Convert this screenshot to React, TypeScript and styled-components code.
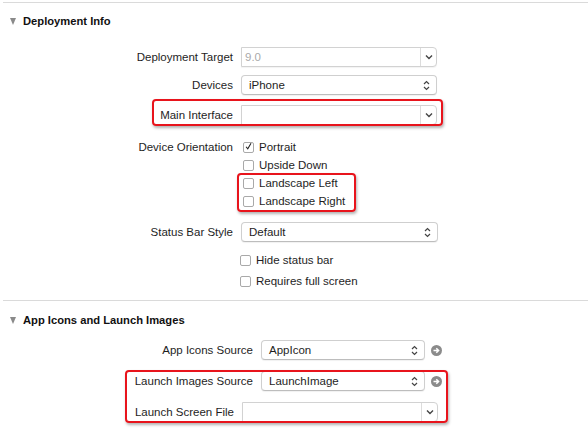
import styled, { createGlobalStyle } from 'styled-components';
import { ReactNode } from 'react';

const GlobalStyle = createGlobalStyle`
  html, body {
    margin: 0;
    padding: 0;
    background: #fff;
  }
  body {
    font-family: 'Liberation Sans', Arial, sans-serif;
    font-size: 11.5px;
    color: #1e1e1e;
  }
`;

function UpDown() {
  return (
    <svg width='7' height='11' viewBox='0 0 7 11'>
      <path d='M1 4 L3.5 1.5 L6 4 M1 7 L3.5 9.5 L6 7' fill='none' stroke='#444' strokeWidth='1.2' />
    </svg>
  );
}

function Down() {
  return (
    <svg width='8' height='6' viewBox='0 0 8 6'>
      <path d='M1 1.5 L4 4.5 L7 1.5' fill='none' stroke='#444' strokeWidth='1.4' />
    </svg>
  );
}

function Tick() {
  return (
    <svg width='11' height='11' viewBox='0 0 11 11'>
      <path d='M2.5 5.8 L4.6 8.3 L8.6 1.6' fill='none' stroke='#222' strokeWidth='1.3' />
    </svg>
  );
}

function GoArrow() {
  return (
    <svg width='11' height='11' viewBox='0 0 11 11'>
      <circle cx='5.5' cy='5.5' r='5.5' fill='#8b8b8b' />
      <path d='M2.5 5.5 H7.5 M5.3 3.2 L7.6 5.5 L5.3 7.8' fill='none' stroke='#fff' strokeWidth='1.5' />
    </svg>
  );
}

interface PopUpProps {
  value: string;
  width: number;
}

function PopUp({ value, width }: PopUpProps) {
  return (
    <StyledPopUp $width={width}>
      <span>{value}</span>
      <UpDown />
    </StyledPopUp>
  );
}

interface ComboProps {
  value?: string;
  width: number;
  disabled?: boolean;
}

function Combo({ value, width, disabled }: ComboProps) {
  return (
    <StyledCombo $width={width}>
      <ComboField $disabled={disabled}>{value}</ComboField>
      <ComboButton>
        <Down />
      </ComboButton>
    </StyledCombo>
  );
}

interface CheckProps {
  label: string;
  checked?: boolean;
  left: number;
  top: number;
}

function Check({ label, checked, left, top }: CheckProps) {
  return (
    <CheckRow $left={left} $top={top}>
      <Box>{checked && <Tick />}</Box>
      {label}
    </CheckRow>
  );
}

interface SectionProps {
  title: string;
  children: ReactNode;
  $headerHeight: number;
}

function Section({ title, children, $headerHeight }: SectionProps) {
  return (
    <StyledSection>
      <Header $height={$headerHeight}>
        <Disclosure />
        {title}
      </Header>
      {children}
    </StyledSection>
  );
}

export default function App() {
  return (
    <>
      <GlobalStyle />
      <Page>
        <Section title='Deployment Info' $headerHeight={36}>
          <Row $top={8}>
            <Label $width={233}>Deployment Target</Label>
            <Combo value='9.0' width={196} disabled />
          </Row>
          <Row $top={8}>
            <Label $width={233}>Devices</Label>
            <PopUp value='iPhone' width={196} />
          </Row>
          <Row $top={10}>
            <Label $width={233}>Main Interface</Label>
            <Combo width={196} />
            <Mark $left={152} $top={-6} $width={291} $height={27} />
          </Row>
          <CheckLine $top={13}>
            <Label $width={233}>Device Orientation</Label>
            <Check label='Portrait' checked left={2} top={0} />
          </CheckLine>
          <Check label='Upside Down' left={243} top={0} />
          <Group>
            <Check label='Landscape Left' left={243} top={0} />
            <Check label='Landscape Right' left={243} top={0} />
            <Mark $left={237} $top={-1} $width={119} $height={39} />
          </Group>
          <Row $top={12}>
            <Label $width={233}>Status Bar Style</Label>
            <PopUp value='Default' width={197} />
          </Row>
          <Check label='Hide status bar' left={240} top={9} />
          <Check label='Requires full screen' left={240} top={3} />
          <Spacer $height={10} />
        </Section>
        <Section title='App Icons and Launch Images' $headerHeight={38}>
          <Row $top={1}>
            <Label $width={253}>App Icons Source</Label>
            <PopUp value='AppIcon' width={164} />
            <Go>
              <GoArrow />
            </Go>
          </Row>
          <Group>
            <Row $top={11}>
              <Label $width={253}>Launch Images Source</Label>
              <PopUp value='LaunchImage' width={164} />
              <Go>
                <GoArrow />
              </Go>
            </Row>
            <Row $top={11}>
              <Label $width={234}>Launch Screen File</Label>
              <Combo width={196} />
            </Row>
            <Mark $left={125} $top={-1} $width={323} $height={53} />
          </Group>
        </Section>
      </Page>
    </>
  );
}

const Page = styled.div`
  width: 588px;
  height: 428px;
  overflow: hidden;
  padding-top: 2px;
  box-sizing: border-box;
`;

const StyledSection = styled.section`
  margin-left: 3px;
  border-top: 1px solid #dadada;
  & > * {
    margin-left: -3px;
  }
`;

const Header = styled.div<{ $height: number }>`
  height: ${(p) => p.$height}px;
  display: flex;
  align-items: center;
  padding-left: 10px;
  font-size: 11.2px;
  font-weight: bold;
  color: #111;
`;

const Disclosure = styled.span`
  width: 0;
  height: 0;
  border-left: 3.5px solid transparent;
  border-right: 3.5px solid transparent;
  border-top: 7px solid #8a8a8a;
  margin-right: 7px;
`;

const Row = styled.div<{ $top: number }>`
  position: relative;
  display: flex;
  align-items: center;
  height: 20px;
  margin-top: ${(p) => p.$top}px;
`;

const Label = styled.div<{ $width: number }>`
  width: ${(p) => p.$width}px;
  text-align: right;
  padding-right: 8px;
  box-sizing: content-box;
  white-space: nowrap;
`;

const StyledPopUp = styled.div<{ $width: number }>`
  width: ${(p) => p.$width}px;
  height: 20px;
  box-sizing: border-box;
  display: flex;
  align-items: center;
  justify-content: space-between;
  padding: 0 6px 0 7px;
  border: 1px solid #cfcfcf;
  border-bottom-color: #bdbdbd;
  border-radius: 4px;
  background: #fff;
  box-shadow: 0 1px 1px rgba(0, 0, 0, 0.06);
`;

const StyledCombo = styled.div<{ $width: number }>`
  width: ${(p) => p.$width}px;
  height: 20px;
  box-sizing: border-box;
  display: flex;
  border: 1px solid #d2d2d2;
  border-radius: 0 4px 4px 0;
  background: #fff;
  box-shadow: 0 1px 1px rgba(0, 0, 0, 0.05);
`;

const ComboField = styled.div<{ $disabled?: boolean }>`
  flex: 1;
  display: flex;
  align-items: center;
  padding-left: 3px;
  color: ${(p) => (p.$disabled ? '#aaa' : 'inherit')};
`;

const ComboButton = styled.div`
  width: 15px;
  border-left: 1px solid #dcdcdc;
  display: flex;
  align-items: center;
  justify-content: center;
`;

const CheckLine = styled.div<{ $top: number }>`
  display: flex;
  align-items: center;
  height: 18px;
  margin-top: ${(p) => p.$top}px;
`;

const CheckRow = styled.div<{ $left: number; $top: number }>`
  display: flex;
  align-items: center;
  height: 18px;
  padding-left: ${(p) => p.$left}px;
  margin-top: ${(p) => p.$top}px;
  white-space: nowrap;
`;

const Box = styled.span`
  width: 11px;
  height: 11px;
  box-sizing: border-box;
  border: 1px solid #a9a9a9;
  border-radius: 2px;
  background: #fff;
  margin-right: 5px;
  display: flex;
  align-items: center;
  justify-content: center;

  svg {
    margin-top: -1px;
  }
`;

const Group = styled.div`
  position: relative;
`;

const Mark = styled.div<{ $left: number; $top: number; $width: number; $height: number }>`
  position: absolute;
  left: ${(p) => p.$left}px;
  top: ${(p) => p.$top}px;
  width: ${(p) => p.$width}px;
  height: ${(p) => p.$height}px;
  box-sizing: border-box;
  border: 2px solid #e8141c;
  border-radius: 4px;
  box-shadow: 1px 2px 3px rgba(0, 0, 0, 0.3);
  pointer-events: none;
`;

const Go = styled.span`
  display: flex;
  margin-left: 6px;
`;

const Spacer = styled.div<{ $height: number }>`
  height: ${(p) => p.$height}px;
`;
